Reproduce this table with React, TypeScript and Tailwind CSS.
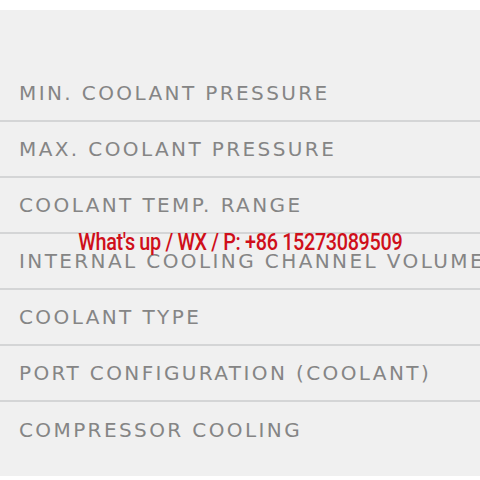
const rows = [
  "MIN. COOLANT PRESSURE",
  "MAX. COOLANT PRESSURE",
  "COOLANT TEMP. RANGE",
  "INTERNAL COOLING CHANNEL VOLUME",
  "COOLANT TYPE",
  "PORT CONFIGURATION (COOLANT)",
  "COMPRESSOR COOLING",
];

export default function App() {
  return (
    <div className="relative w-[480px] h-[480px] overflow-hidden bg-white">
      {/* Spec table */}
      <div className="mt-[10px] h-[466px] bg-[#f0f0f0] pt-[56px]">
        {rows.map((label, i) => (
          <div
            key={label}
            className={`flex h-[56px] items-center pl-[19px] whitespace-nowrap ${
              i < rows.length - 1 ? "border-b-2 border-[#d4d5d6]" : ""
            }`}
          >
            <span className="font-['DejaVu_Sans',sans-serif] text-[20px] tracking-[2.4px] text-[#858585]">
              {label}
            </span>
          </div>
        ))}
      </div>

      {/* Watermark */}
      <div className="absolute left-0 right-0 top-[228px] flex justify-center">
        <span className="inline-block scale-x-[0.825] font-['Roboto',sans-serif] font-medium text-[24px] leading-[28px] tracking-[-0.4px] text-[#cf0f1a] whitespace-nowrap">
          What's up / WX / P: +86 15273089509
        </span>
      </div>
    </div>
  );
}
